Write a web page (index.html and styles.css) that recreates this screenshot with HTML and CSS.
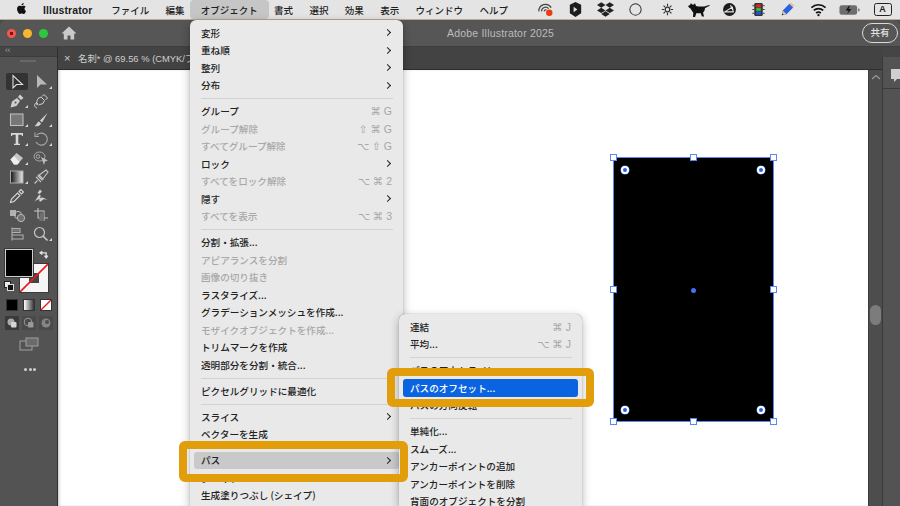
FILE: index.html
```html
<!DOCTYPE html>
<html lang="ja">
<head>
<meta charset="utf-8">
<title>Adobe Illustrator 2025</title>
<link rel="stylesheet" href="styles.css">
</head>
<body>
<div class="screen">
  <header class="menubar">
    <svg class="apple" viewBox="0 0 24 24"><path d="M12.152 6.896c-.948 0-2.415-1.078-3.96-1.04-2.04.027-3.91 1.183-4.961 3.014-2.117 3.675-.546 9.103 1.519 12.09 1.013 1.454 2.208 3.09 3.792 3.039 1.52-.065 2.09-.987 3.935-.987 1.831 0 2.35.987 3.96.948 1.637-.026 2.676-1.48 3.676-2.948 1.156-1.688 1.636-3.325 1.662-3.415-.039-.013-3.182-1.221-3.22-4.857-.026-3.04 2.48-4.494 2.597-4.559-1.429-2.09-3.623-2.324-4.39-2.376-2-.156-3.675 1.09-4.61 1.09zM15.53 3.83c.843-1.012 1.4-2.427 1.245-3.83-1.207.052-2.662.805-3.532 1.818-.78.896-1.454 2.338-1.273 3.714 1.338.104 2.715-.688 3.559-1.701"/></svg>
    <span class="app-name">Illustrator</span>
    <nav class="menu-titles">
      <span class="mt">ファイル</span>
      <span class="mt">編集</span>
      <span class="mt mt-open">オブジェクト</span>
      <span class="mt">書式</span>
      <span class="mt">選択</span>
      <span class="mt">効果</span>
      <span class="mt">表示</span>
      <span class="mt">ウィンドウ</span>
      <span class="mt">ヘルプ</span>
    </nav>
    <div class="status">
      <svg class="st" viewBox="0 0 18 18"><path d="M2 11a7 7 0 0 1 13-4M4.800 11a4.300 4.300 0 0 1 7.500-3M7.800 11a1.500 1.500 0 0 1 2.200-1.500" fill="none" stroke="#444" stroke-width="1.300"/><circle cx="13" cy="12.500" r="3.400" fill="#ee3a12"/></svg>
      <svg class="st" viewBox="0 0 18 18"><path d="M9 1l6 3v9l-6 4-6-4V4z" fill="#1d1d1d"/><path d="M7 6l4 3-4 3z" fill="#ddd"/></svg>
      <svg class="st" viewBox="0 0 24 24"><path d="M6 1.807L0 5.629l6 3.822 6.001-3.822L6 1.807zM18 1.807l-6 3.822 6 3.822 6-3.822-6-3.822zM0 13.274l6 3.822 6.001-3.822L6 9.452l-6 3.822zM18 9.452l-6 3.822 6 3.822 6-3.822-6-3.822zM6 18.371l6.001 3.822 6-3.822-6-3.822L6 18.371z" fill="#222"/></svg>
      <svg class="st" viewBox="0 0 18 18"><circle cx="9" cy="9" r="6" fill="none" stroke="#333" stroke-width="1.100"/></svg>
      <svg class="st" viewBox="0 0 18 18"><circle cx="9" cy="9" r="2.400" fill="none" stroke="#333" stroke-width="1.300"/><path d="M9 3v2.500M9 12.500V15M3 9h2.500M12.500 9H15M4.800 4.800l1.700 1.700M11.500 11.500l1.700 1.700M4.800 13.200l1.700-1.700M11.500 6.500l1.700-1.700" stroke="#333" stroke-width="1.200"/></svg>
      <svg class="st st-cat" viewBox="0 0 22 14"><path d="M0 3l2-1 1-2 1 1.500 2 0L7 .3 8 3c2 .6 6 .8 8 .4 2-.3 3-.8 5-1.400l1 .6c-2 .8-3 1.800-5 2.400 0 2-1 3.500-2 4.500l1 4h-2l-1.500-3.500c-1.500.4-2.500.4-4 .1L7 14H5l.3-4.500C4 8 3 6.500 2.500 5.500 1.500 5 .5 4 0 3z" fill="#111"/></svg>
      <svg class="st" viewBox="0 0 18 18"><circle cx="9" cy="9" r="6.800" fill="#1c1c1c"/><path d="M4 11.500l8-5 1 5zM10 4.500l3 6" fill="none" stroke="#e4e4e4" stroke-width="1.200"/></svg>
      <svg class="st" viewBox="0 0 18 18"><rect x="4.500" y="2" width="9" height="14" rx="1.500" fill="#333"/><rect x="6.500" y="3.500" width="5" height="3.500" fill="#e8261c"/><rect x="6.500" y="7.500" width="5" height="3" fill="#2cc13c"/><rect x="6.500" y="11" width="5" height="3.500" fill="#1f55e0"/><path d="M2.500 5h2M2.500 9h2M2.500 13h2M13.500 5h2M13.500 9h2M13.500 13h2" stroke="#333"/></svg>
      <svg class="st" viewBox="0 0 18 18"><path d="M3 15l1-5 7-7 4 4-7 7z" fill="#2a62e4"/><path d="M11 3l2-1 3 3-1 2z" fill="#e7b58c"/><path d="M3 15l1-5 4 4z" fill="#e8c48f"/><path d="M3 15l.400-2 1.600 1.600z" fill="#222"/></svg>
      <svg class="st" viewBox="0 0 18 18"><path d="M1.500 7a11 11 0 0 1 15 0M4 10a7.300 7.300 0 0 1 10 0M6.500 12.800a3.500 3.500 0 0 1 5 0" fill="none" stroke="#111" stroke-width="1.700"/><circle cx="9" cy="15" r="1.200" fill="#111"/></svg>
      <svg class="st-batt" viewBox="0 0 22 12"><rect x=".5" y="1" width="18.500" height="10" rx="2.500" fill="#6d6d6d"/><rect x="20" y="4.500" width="1.500" height="3" rx=".7" fill="#6d6d6d"/><path d="M10.500 1.500L7 6.500h3l-1.500 4 4.500-5.500h-3l1.500-3.500z" fill="#111"/></svg>
      <span class="ime">A</span>
    </div>
  </header>

  <div class="window">
    <div class="titlebar">
      <div class="lights">
        <i class="light light-r"></i><i class="light light-y"></i><i class="light light-g"></i>
      </div>
      <svg class="home" viewBox="0 0 16 16"><path d="M8 1.500L.5 8.500h2.300V14.500h3.700v-4h3v4h3.700V8.500h2.300z" fill="#c9c9c9"/></svg>
      <span class="doc-title">Adobe Illustrator 2025</span>
      <span class="share">共有</span>
    </div>
    <div class="workarea">
      <aside class="tools">
        <div class="tools-head">‹‹</div>
        <div class="tools-grip"><i></i></div>
        <div class="tool-grid">
          <span class="tool tool-on"><svg viewBox="0 0 16 16"><path d="M4 1.500v12.500l3.500-3.500h6z" fill="none" stroke="#ddd" stroke-width="1.100"/></svg></span>
          <span class="tool fly"><svg viewBox="0 0 16 16"><path d="M4 1v13l3.500-3.500H14z" fill="#b8b8b8"/></svg></span>
          <span class="tool fly"><svg viewBox="0 0 16 16"><path d="M1.500 14.500l1.500-6 5-3.500 3 3-3.500 5zM9 4l2-2.500 3.500 3.500-2.500 2z" fill="#cfcfcf"/><circle cx="6.500" cy="9.500" r="1" fill="#555"/></svg></span>
          <span class="tool"><svg viewBox="0 0 16 16"><path d="M4 15c-3-1-3-4-1-5s2 2 1 2 0-5 1-6.500l3-1.500 3.500 3.500-1.500 3-4.500 1.500M9 3.500l2-2 3.500 3.500-2 2" fill="none" stroke="#cfcfcf" stroke-width="1"/></svg></span>
          <span class="tool fly"><svg viewBox="0 0 16 16"><rect x="1.500" y="2" width="12.500" height="11.500" fill="#777" stroke="#bdbdbd" stroke-width="1.100"/></svg></span>
          <span class="tool fly"><svg viewBox="0 0 16 16"><path d="M14.500 1L7 8.500l2 2zM6 9.500c-2 .5-2 3-4.500 4.500 3.500.8 6-.5 6.500-2.500z" fill="#d2d2d2"/></svg></span>
          <span class="tool fly"><svg viewBox="0 0 16 16"><path d="M2 2h12v3h-1l-.5-1.300H9.300v9h1.700v1.300H5v-1.300h1.700v-9H3.500L3 5H2z" fill="#d8d8d8"/></svg></span>
          <span class="tool fly"><svg viewBox="0 0 16 16"><path d="M3.500 4.500A6 6 0 1 1 3 11" fill="none" stroke="#a8a8a8" stroke-width="1.100"/><path d="M2 1.500v4h4" fill="none" stroke="#a8a8a8" stroke-width="1.100"/></svg></span>
          <span class="tool fly"><svg viewBox="0 0 16 16"><path d="M1.500 9.500l6-6.500 6.500 5-5.500 6.500H5z" fill="#c4c4c4"/><path d="M1.500 9.500l3.500 5h3.500l2-2.500L5 6z" fill="#eee"/></svg></span>
          <span class="tool"><svg viewBox="0 0 16 16"><ellipse cx="6.500" cy="6.500" rx="5.500" ry="4.500" fill="none" stroke="#aaa"/><circle cx="5" cy="6.500" r="1.800" fill="none" stroke="#aaa"/><path d="M8 7l7 3.500-3 1-1 3.500z" fill="#bdbdbd"/></svg></span>
          <span class="tool fly"><svg viewBox="0 0 16 16"><defs><linearGradient id="grad"><stop offset="0" stop-color="#111"/><stop offset="1" stop-color="#eee"/></linearGradient></defs><rect x="1.500" y="2" width="12.500" height="12" fill="url(#grad)" stroke="#aaa"/></svg></span>
          <span class="tool"><svg viewBox="0 0 16 16"><path d="M1.500 14.500l3-3M3 8l5 5M5.500 5.500l5 5M5 7l4-3 4-3 2 2-3 4-3 4z" fill="none" stroke="#c4c4c4" stroke-width="1.100"/></svg></span>
          <span class="tool"><svg viewBox="0 0 16 16"><path d="M1.500 14.500l1-3.500 6-6 2.500 2.500-6 6zM10 3.500l2-2 2.500 2.500-2 2z" fill="none" stroke="#d8d8d8" stroke-width="1.100"/></svg></span>
          <span class="tool"><svg viewBox="0 0 16 16"><path d="M1 13.500c2-1 3.500-5 5-6.500 2-1.500 2 2 .5 3.500 2.500-2 4.500-1 8 1.500-3-1.500-4.500-1-6 1-1 1-3 .5-2-1 .5-2-3 .5-5.500 1.500zM4.500 5l2.500-3.500 2 2L6.500 6z" fill="#cfcfcf"/></svg></span>
          <span class="tool"><svg viewBox="0 0 16 16"><rect x="1" y="3" width="6" height="6" fill="#b0b0b0"/><circle cx="9" cy="8" r="3.600" fill="none" stroke="#bbb"/><circle cx="12" cy="11" r="3.600" fill="#6f6f6f" stroke="#bbb"/></svg></span>
          <span class="tool"><svg viewBox="0 0 16 16"><path d="M5 1v10h10M1 4h10v10" fill="none" stroke="#c4c4c4" stroke-width="1.100"/><path d="M7 6l4-1v9H6z" fill="#6f6f6f"/></svg></span>
          <span class="tool"><svg viewBox="0 0 16 16"><path d="M3 1.500v13M3 2.500h8v4H3M3 9h11v4H3" fill="none" stroke="#b0b0b0" stroke-width="1.100"/><rect x="4" y="3.500" width="6" height="2" fill="#808080"/></svg></span>
          <span class="tool fly"><svg viewBox="0 0 16 16"><circle cx="6.500" cy="6.500" r="5" fill="none" stroke="#c4c4c4" stroke-width="1.200"/><path d="M10 10l4.500 4.500" stroke="#c4c4c4" stroke-width="1.700"/></svg></span>
        </div>
        <div class="wells">
          <span class="well-stroke"><i class="well-hole"></i><svg class="slash" viewBox="0 0 28 28"><path d="M0 28L28 0" stroke="#f01818" stroke-width="1.600"/></svg></span>
          <span class="well-fill"></span>
          <svg class="well-swap" viewBox="0 0 10 10"><path d="M1 3.500h5.500v4M5 6l1.500 2L8 6M3 2L1 3.500 3 5" fill="none" stroke="#e2e2e2" stroke-width="1.200"/></svg>
          <span class="well-default"><i class="wd-w"></i><i class="wd-b"></i></span>
        </div>
        <div class="modes">
          <span class="mode mode-solid"></span>
          <span class="mode mode-grad"></span>
          <span class="mode mode-none"><svg viewBox="0 0 11 11"><path d="M0 11L11 0" stroke="#f01818" stroke-width="1.500"/></svg></span>
        </div>
        <div class="draws">
          <span class="draw draw-on"><svg viewBox="0 0 12 12"><circle cx="5" cy="5" r="3.500" fill="#aaa"/><rect x="5" y="5" width="5.500" height="5.500" rx="1" fill="#d6d6d6"/></svg></span>
          <span class="draw"><svg viewBox="0 0 12 12"><circle cx="5" cy="5" r="3.800" fill="none" stroke="#999"/><rect x="5" y="5" width="5.500" height="5.500" rx="1" fill="#999"/></svg></span>
          <span class="draw"><svg viewBox="0 0 12 12"><circle cx="6" cy="6" r="4.500" fill="#858585"/><circle cx="7" cy="5" r="2" fill="#4f4f4f"/></svg></span>
        </div>
        <svg class="screenmode" viewBox="0 0 20 14"><rect x="1" y="4" width="12" height="9" fill="none" stroke="#a0a0a0"/><rect x="7" y="1" width="12" height="8" fill="#6b6b6b" stroke="#a0a0a0"/></svg>
        <div class="more"><i></i><i></i><i></i></div>
      </aside>

      <div class="workspace">
        <div class="tabbar">
          <span class="tab-x">×</span>
          <span class="tab-name">名刺* @ 69.56 % (CMYK/プレビュー)</span>
        </div>
        <div class="stage">
          <div class="canvas">
            <div class="art">
              <i class="hd hd-tl"></i><i class="hd hd-tc"></i><i class="hd hd-tr"></i>
              <i class="hd hd-ml"></i><i class="hd hd-mr"></i>
              <i class="hd hd-bl"></i><i class="hd hd-bc"></i><i class="hd hd-br"></i>
              <i class="widget w-tl"></i><i class="widget w-tr"></i>
              <i class="widget w-bl"></i><i class="widget w-br"></i>
              <i class="center"></i>
            </div>
          </div>
          <div class="scroll">
            <svg class="scroll-up" viewBox="0 0 10 6"><path d="M1 5l4-3.500L9 5" fill="none" stroke="#999" stroke-width="1.200"/></svg>
            <i class="thumb"></i>
          </div>
        </div>
      </div>

      <aside class="dock">
        <div class="dock-head"></div>
        <div class="dock-panel">
          <div class="dock-btn"><svg viewBox="0 0 16 16"><path d="M0 1h16v10H6l-3 3v-3H0z" fill="#cfcfcf"/></svg></div>
        </div>
      </aside>
    </div>
  </div>

  <div class="menu menu-object">
    <div class="row"><span>変形</span><i class="arrow"></i></div>
    <div class="row"><span>重ね順</span><i class="arrow"></i></div>
    <div class="row"><span>整列</span><i class="arrow"></i></div>
    <div class="row"><span>分布</span><i class="arrow"></i></div>
    <div class="sep"></div>
    <div class="row"><span>グループ</span><kbd class="key">⌘ G</kbd></div>
    <div class="row off"><span>グループ解除</span><kbd class="key">⇧ ⌘ G</kbd></div>
    <div class="row off"><span>すべてグループ解除</span><kbd class="key">⌥ ⇧ G</kbd></div>
    <div class="row"><span>ロック</span><i class="arrow"></i></div>
    <div class="row off"><span>すべてをロック解除</span><kbd class="key">⌥ ⌘ 2</kbd></div>
    <div class="row"><span>隠す</span><i class="arrow"></i></div>
    <div class="row off"><span>すべてを表示</span><kbd class="key">⌥ ⌘ 3</kbd></div>
    <div class="sep"></div>
    <div class="row"><span>分割・拡張...</span></div>
    <div class="row off"><span>アピアランスを分割</span></div>
    <div class="row off"><span>画像の切り抜き</span></div>
    <div class="row"><span>ラスタライズ...</span></div>
    <div class="row"><span>グラデーションメッシュを作成...</span></div>
    <div class="row off"><span>モザイクオブジェクトを作成...</span></div>
    <div class="row"><span>トリムマークを作成</span></div>
    <div class="row"><span>透明部分を分割・統合...</span></div>
    <div class="sep"></div>
    <div class="row"><span>ピクセルグリッドに最適化</span></div>
    <div class="sep"></div>
    <div class="row"><span>スライス</span><i class="arrow"></i></div>
    <div class="row"><span>ベクターを生成</span></div>
    <div class="sep"></div>
    <div class="row row-hover"><span>パス</span><i class="arrow"></i></div>
    <div class="row"><span>シェイプ</span><i class="arrow"></i></div>
    <div class="row"><span>生成塗りつぶし (シェイプ)</span></div>
  </div>

  <div class="menu menu-path">
    <div class="row"><span>連結</span><kbd class="key">⌘ J</kbd></div>
    <div class="row"><span>平均...</span><kbd class="key">⌥ ⌘ J</kbd></div>
    <div class="sep"></div>
    <div class="row"><span>パスのアウトライン</span></div>
    <div class="row row-active"><span>パスのオフセット...</span></div>
    <div class="row"><span>パスの方向反転</span></div>
    <div class="sep"></div>
    <div class="row"><span>単純化...</span></div>
    <div class="row"><span>スムーズ...</span></div>
    <div class="row"><span>アンカーポイントの追加</span></div>
    <div class="row"><span>アンカーポイントを削除</span></div>
    <div class="row"><span>背面のオブジェクトを分割</span></div>
  </div>

  <div class="callout callout-path"></div>
  <div class="callout callout-offset"></div>
</div>
</body>
</html>
```

FILE: styles.css
```css
* { box-sizing: border-box; }
html, body { margin: 0; padding: 0; }
body { width: 900px; height: 506px; overflow: hidden; background: #4a4a4a; font-family: "Noto Sans CJK JP", "Noto Sans", sans-serif; }
.screen { position: relative; width: 900px; height: 506px; overflow: hidden; display: flex; flex-direction: column; }
i { display: block; font-style: normal; }

/* macOS menu bar */
.menubar { height: 20px; flex: none; display: flex; align-items: center; background: #e4e4e4; border-bottom: 1px solid #b9ad95; color: #1d1d1d; font-size: 9.5px; font-weight: 500; padding-left: 16px; }
.apple { width: 11px; height: 13px; flex: none; margin-bottom: 2px; fill: #111; }
.app-name { margin-left: 16px; width: 60px; font: 700 10.5px "Liberation Sans", sans-serif; letter-spacing: .1px; }
.menu-titles { display: flex; height: 19px; }
.mt { display: flex; align-items: center; padding: 0 8.2px; white-space: nowrap; }
.mt-open { padding: 0 11px; margin: 0 -3px; background: #c6c6c6; border-radius: 4px; }
.status { margin-left: auto; width: 370px; height: 19px; flex: none; display: grid; grid-template-columns: 30.5px 30px 29.5px 31px 32.5px 31.5px 29px 28.5px 30px 31.5px 31px 35px; align-items: center; justify-items: center; }
.st { width: 17px; height: 17px; }
.st-cat { width: 22px; height: 14px; }
.st-batt { width: 21px; height: 12px; }
.ime { width: 18px; height: 13px; border: 1.2px solid #222; border-radius: 2.5px; font: 700 9px/11px "Liberation Sans", sans-serif; text-align: center; color: #222; }

/* Window */
.window { flex: 1; display: flex; flex-direction: column; min-height: 0; border-radius: 6px 6px 0 0; overflow: hidden; }
.titlebar { height: 27px; flex: none; display: flex; align-items: center; position: relative; background: #565656; border-bottom: 1px solid #3f3f3f; padding-left: 7px; }
.lights { display: flex; gap: 7px; }
.light { width: 9px; height: 9px; border-radius: 50%; }
.light-r { background: radial-gradient(circle, #7a1515 0 1.5px, #f2574f 2px); }
.light-y { background: #f8b62d; }
.light-g { background: #2cc840; }
.home { width: 16px; height: 16px; margin-left: 13px; }
.doc-title { position: absolute; left: 447px; top: 5px; font: 400 10.5px/16px "Liberation Sans", sans-serif; color: #bcbcbc; letter-spacing: .2px; }
.share { position: absolute; left: 862px; top: 3px; width: 36px; height: 20px; border: 1px solid #dadada; border-radius: 10px; font-size: 9.5px; line-height: 17px; font-weight: 500; color: #e2e2e2; text-align: center; }
.workarea { flex: 1; display: flex; min-height: 0; }

/* Tools */
.tools { width: 58px; flex: none; background: #535353; border-right: 1px solid #2f2f2f; display: flex; flex-direction: column; }
.tools-head { height: 10px; background: #454545; border-bottom: 1px solid #3c3c3c; color: #9a9a9a; font: 400 9px/7px "Liberation Sans", sans-serif; padding-left: 5px; letter-spacing: -.5px; }
.tools-grip { height: 15px; padding: 3px 0 0 20px; }
.tools-grip i { width: 16px; height: 2px; background: #686868; }
.tool-grid { display: grid; grid-template-columns: 24px 24px; grid-auto-rows: 19px; padding-left: 5px; }
.tool { position: relative; display: flex; align-items: center; justify-content: center; }
.tool svg { width: 16px; height: 16px; }
.tool-on { background: #333; border-radius: 2px; margin: 1px; }
.fly::after { content: ""; position: absolute; right: 1px; bottom: 2px; width: 0; height: 0; border-left: 3px solid transparent; border-bottom: 3px solid #d6d6d6; }
.wells { position: relative; height: 47px; margin-top: 6px; }
.well-fill { position: absolute; left: 5px; top: 0; width: 28px; height: 28px; background: #000; border: 1px solid #cfcfcf; box-shadow: 0 0 0 1px #3a3a3a; }
.well-stroke { position: absolute; left: 20px; top: 15px; width: 28px; height: 28px; background: #f5f5f5; box-shadow: 0 0 0 1px #3a3a3a; }
.well-hole { position: absolute; left: 9px; top: 9px; width: 10px; height: 10px; background: #444; }
.slash { position: absolute; left: 0; top: 0; width: 28px; height: 28px; }
.well-swap { position: absolute; left: 39px; top: 0; width: 11px; height: 11px; }
.well-default { position: absolute; left: 4px; top: 32px; width: 11px; height: 11px; }
.wd-w { position: absolute; left: 0; top: 0; width: 7px; height: 7px; background: #eee; border: 1px solid #222; }
.wd-b { position: absolute; left: 3px; top: 3px; width: 7px; height: 7px; background: #111; border: 1px solid #ddd; }
.modes { display: flex; gap: 5px; padding-left: 6px; height: 12px; margin-top: 3px; }
.mode { width: 12px; height: 12px; display: block; border: 1px solid #333; }
.mode-solid { background: #000; }
.mode-grad { background: linear-gradient(90deg, #fff, #333); }
.mode-none { background: #fff; }
.mode-none svg { display: block; width: 10px; height: 10px; }
.draws { display: flex; gap: 3px; padding-left: 5px; height: 15px; margin-top: 5px; }
.draw { width: 14px; height: 14px; display: flex; align-items: center; justify-content: center; background: #4a4a4a; }
.draw-on { background: #3a3a3a; }
.draw svg { width: 12px; height: 12px; }
.screenmode { width: 20px; height: 14px; margin: 6px 0 0 19px; flex: none; }
.more { display: flex; gap: 1.5px; margin: 17px 0 0 24px; }
.more i { width: 3px; height: 3px; border-radius: 50%; background: #d0d0d0; }

/* Workspace */
.workspace { flex: 1; min-width: 0; display: flex; flex-direction: column; }
.tabbar { height: 23px; flex: none; display: flex; align-items: center; background: #434343; border-bottom: 1px solid #2e2e2e; color: #cfcfcf; white-space: nowrap; overflow: hidden; padding-left: 6px; }
.tab-x { width: 14px; font-family: "Liberation Sans", sans-serif; font-size: 11px; }
.tab-name { font-family: "Liberation Sans", "Noto Sans CJK JP", sans-serif; font-size: 9.4px; }
.stage { flex: 1; display: flex; min-height: 0; }
.canvas { flex: 1; position: relative; background: #fff; box-shadow: inset 2px 0 3px -1px rgba(0,0,0,.25); }
.scroll { width: 14px; flex: none; position: relative; background: #4d4d4d; border-left: 1px solid #3c3c3c; }
.scroll-up { position: absolute; left: 2px; top: 4px; width: 10px; height: 6px; }
.thumb { position: absolute; left: 1px; top: 235px; width: 11px; height: 20px; border-radius: 6px; background: #7c7c7c; }

/* Artwork on the canvas */
.art { position: absolute; left: 556px; top: 88px; width: 159px; height: 263px; background: #000; outline: 1px solid #5b88f5; }
.hd { position: absolute; width: 7px; height: 7px; background: #fff; border: 1px solid #5b88f5; }
.hd-tl, .hd-ml, .hd-bl { left: -4px; }
.hd-tc, .hd-bc { left: 76px; }
.hd-tr, .hd-mr, .hd-br { left: 156px; }
.hd-tl, .hd-tc, .hd-tr { top: -4px; }
.hd-ml, .hd-mr { top: 128px; }
.hd-bl, .hd-bc, .hd-br { top: 260px; }
.widget { position: absolute; width: 8px; height: 8px; border-radius: 50%; background: #2c5fe6; border: 2px solid #fff; box-shadow: 0 0 0 .5px #5b88f5; }
.w-tl { left: 7px; top: 8px; }
.w-tr { left: 143px; top: 8px; }
.w-bl { left: 7px; top: 248px; }
.w-br { left: 143px; top: 248px; }
.center { position: absolute; left: 77px; top: 130px; width: 5px; height: 5px; border-radius: 50%; background: #3f72ee; }

/* Dock */
.dock { width: 18px; flex: none; display: flex; flex-direction: column; background: #454545; }
.dock-head { height: 10px; flex: none; }
.dock-panel { flex: 1; background: #535353; border-left: 1px solid #3a3a3a; }
.dock-btn { height: 32px; border-bottom: 1px solid #3a3a3a; overflow: hidden; padding: 11px 0 0 8px; }
.dock-btn svg { display: block; width: 16px; height: 16px; }

/* Menus */
.menu { position: absolute; background: #e9e9e9; border-radius: 6px 6px 0 0; box-shadow: 0 0 1px rgba(0,0,0,.45), 0 3px 10px rgba(0,0,0,.3); padding-top: 4px; color: #222; font-size: 9.6px; font-weight: 500; }
.menu-object { left: 190px; top: 20px; width: 213px; height: 486px; }
.menu-path { left: 399px; top: 314px; width: 183px; height: 192px; }
.row { height: 17.5px; margin: 0 4px; padding: 0 7px; display: flex; align-items: center; justify-content: space-between; white-space: nowrap; border-radius: 3px; }
.row span { line-height: 12px; }
.off { color: #a8a8a8; }
.key { font: 400 10.5px/12px "Liberation Sans", "DejaVu Sans", sans-serif; color: #a6a6a6; }
.arrow { width: 5px; height: 5px; border-top: 1.4px solid #222; border-right: 1.4px solid #222; transform: rotate(45deg); margin-right: 2px; }
.sep { height: 1px; margin: 4px 10px 3.5px 11px; background: #d2d2d2; }
.row-hover { background: #c9c9c9; }
.row-active { background: #0a63e0; color: #fff; }

/* Orange call-outs */
.callout { position: absolute; border: 8px solid #e29d0a; border-radius: 6px; }
.callout-path { left: 179px; top: 441px; width: 229px; height: 41px; }
.callout-offset { left: 387px; top: 368px; width: 207px; height: 39px; }
```
